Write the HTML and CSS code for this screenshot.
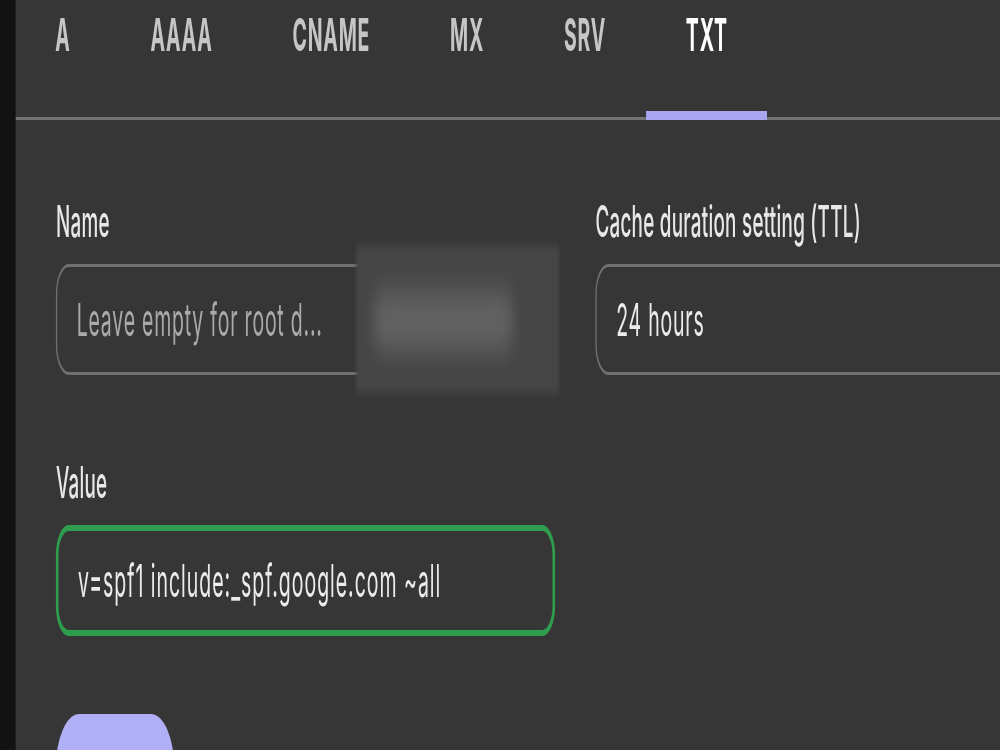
FILE: index.html
```html
<!DOCTYPE html>
<html lang="en">
<head>
<meta charset="utf-8">
<title>DNS record</title>
<link rel="stylesheet" href="styles.css">
</head>
<body>
<div class="screen">
  <aside class="rail"></aside>
  <main class="panel">
    <nav class="tabs" role="tablist">
      <div class="tab" role="tab">A</div>
      <div class="tab" role="tab">AAAA</div>
      <div class="tab" role="tab">CNAME</div>
      <div class="tab" role="tab">MX</div>
      <div class="tab" role="tab">SRV</div>
      <div class="tab is-active" role="tab" aria-selected="true">TXT</div>
    </nav>
    <form class="record-form">
      <div class="fields">
        <div class="field">
          <label class="field-label" for="rec-name">Name</label>
          <div class="control">
            <input id="rec-name" type="text" placeholder="Leave empty for root d...">
            <span class="suffix-mask"></span>
          </div>
        </div>
        <div class="field">
          <label class="field-label" for="rec-ttl">Cache duration setting (TTL)</label>
          <div class="control control-wide">
            <input id="rec-ttl" type="text" value="24 hours">
          </div>
        </div>
        <div class="field">
          <label class="field-label" for="rec-value">Value</label>
          <div class="control is-valid">
            <input id="rec-value" class="mono-ish" type="text" value="v=spf1 include:_spf.google.com ~all">
          </div>
        </div>
      </div>
      <div class="actions">
        <button type="button" class="btn-primary" aria-label="Save"></button>
      </div>
    </form>
  </main>
</div>
</body>
</html>
```

FILE: styles.css
```css
html, body {
  margin: 0;
  height: 100%;
}

body {
  background: #363636;
  overflow: hidden;
  font-family: Inter, "Noto Sans", sans-serif;
}

/* the whole panel is drawn stretched: tall, narrow glyphs and thick horizontal rules */
.screen {
  display: flex;
  width: 770px;
  height: 250px;
  overflow: hidden;
  transform: scale(1.3, 3);
  transform-origin: 0 0;
}

.rail {
  flex: 0 0 11.5px;
  background: #121212;
}

.panel {
  flex: 1;
  min-width: 0;
  overflow: hidden;
}

/* record type tabs */
.tabs {
  display: flex;
  height: 40px;
  box-sizing: border-box;
  border-bottom: 1.2px solid #727272;
}

.tab {
  position: relative;
  padding: 3.6px 30.4px 0 31px;
  font: 700 15px/1 Inter, "Noto Sans", sans-serif;
  letter-spacing: 0.6px;
  color: #c6c6c6;
  cursor: pointer;
}

.tab.is-active {
  color: #ffffff;
}

.tab.is-active::after {
  content: "";
  position: absolute;
  left: 0;
  right: 0;
  bottom: -1.2px;
  height: 3.6px;
  background: #aaa6f2;
}

/* form */
.record-form {
  padding: 27.3px 0 0 31.5px;
}

.fields {
  display: grid;
  grid-template-columns: 384px 384px;
  column-gap: 31px;
  row-gap: 28.4px;
}

.field-label {
  display: block;
  margin-bottom: 6.5px;
  font: 500 14.5px/1 Inter, "Noto Sans", sans-serif;
  letter-spacing: 0.2px;
  color: #e8e8e8;
}

.control {
  position: relative;
  display: flex;
  align-items: center;
  height: 37px;
  box-sizing: border-box;
  padding: 0 15px;
  border: 1.4px solid #707070;
  border-radius: 10px;
}

.control.is-valid {
  border: 2px solid #2f9d4e;
}

.control input {
  flex: 1;
  min-width: 0;
  padding: 0;
  border: 0;
  outline: 0;
  background: transparent;
  font: 400 15px Inter, "Noto Sans", sans-serif;
  letter-spacing: 0.6px;
  color: #ececec;
}

.control input.mono-ish {
  letter-spacing: 0.75px;
}

.control input::placeholder {
  color: #aaaaaa;
  opacity: 1;
}

/* redacted domain suffix */
.suffix-mask {
  position: absolute;
  top: -7px;
  right: -4px;
  width: 156px;
  height: 49px;
  background: #464646;
  filter: blur(1.4px);
}

.suffix-mask::after {
  content: "";
  position: absolute;
  left: 13px;
  top: 15px;
  width: 108px;
  height: 20px;
  border-radius: 8px;
  background: #616161;
  filter: blur(4.5px);
}

.actions {
  margin-top: 26.3px;
}

.btn-primary {
  display: block;
  width: 91px;
  height: 36px;
  padding: 0;
  border: 0;
  border-radius: 18px;
  background: #b1aff6;
}
```
